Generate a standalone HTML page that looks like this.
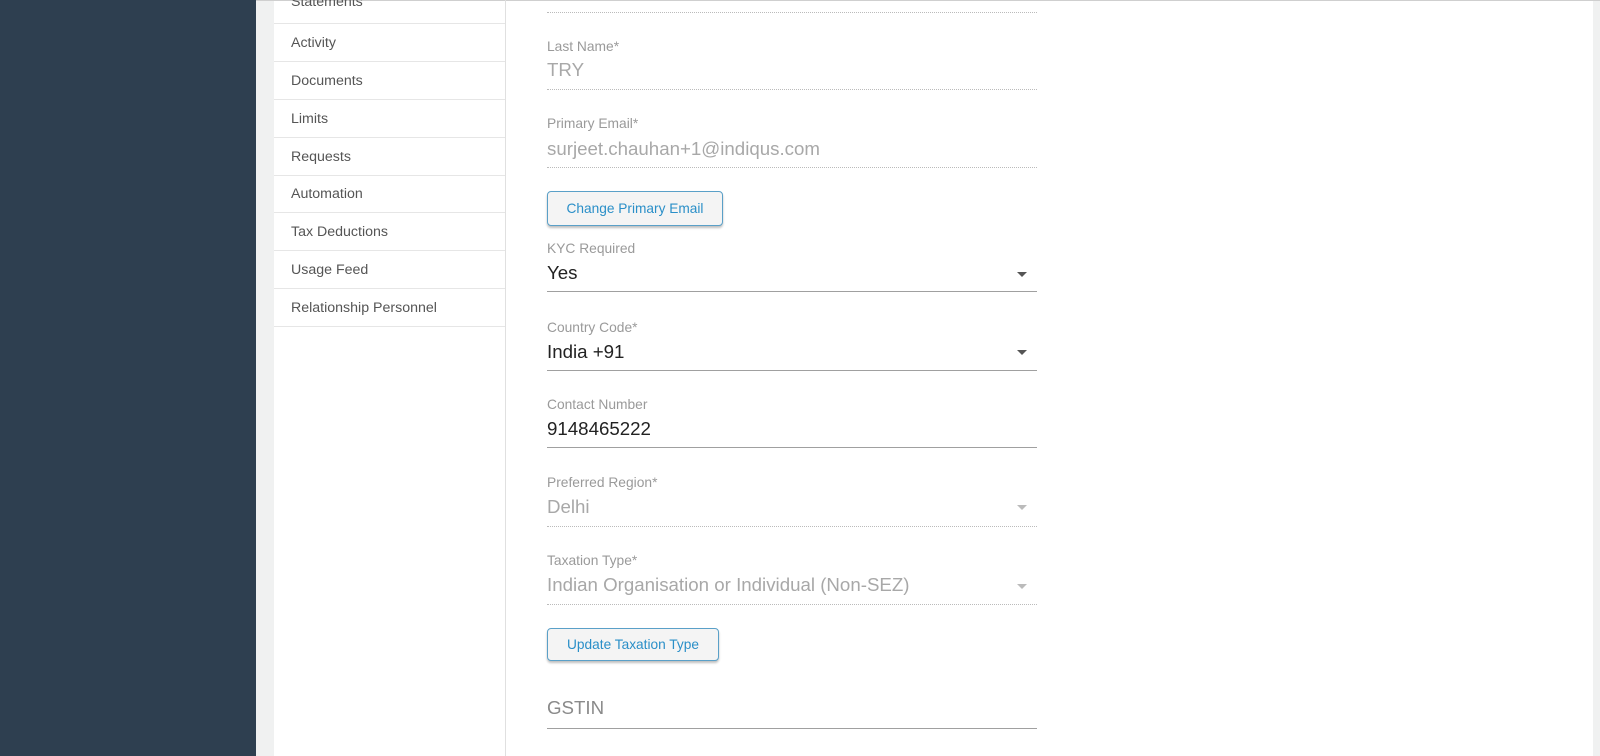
<!DOCTYPE html>
<html><head><meta charset="utf-8"><style>
*{margin:0;padding:0;box-sizing:border-box}
html,body{width:1600px;height:756px;overflow:hidden;background:#fff;font-family:"Liberation Sans",Arial,sans-serif}
.dark{position:absolute;left:0;top:0;width:256px;height:756px;background:#2e3f50}
.gutter{position:absolute;left:256px;top:0;width:18px;height:756px;background:#f0f1f1}
.topline{position:absolute;left:256px;top:0;width:1344px;height:1px;background:#cfcfcf}
.rgut{position:absolute;left:1593px;top:1px;width:7px;height:755px;background:#f0f1f1}
.nav{position:absolute;left:274px;top:0px;width:232px;height:756px;border-right:1px solid #e0e0e0}
.nav div{position:absolute;left:0;width:231px;border-bottom:1px solid #e6e6e6;font-size:14.2px;color:#555;padding-left:17px}
.a{position:absolute;white-space:nowrap}
.lbl{font-size:13.8px;color:#9a9a9a}
.val{font-size:18.7px;color:#222}
.dis{color:#a8a8a8}
.dot{position:absolute;left:547px;width:490px;border-top:1px dotted #bbb;height:0}
.sol{position:absolute;left:547px;width:490px;height:1px;background:#a0a0a0}
.btn{position:absolute;left:547px;border:1px solid #5aa0c8;border-radius:4px;background:#f4f4f4;color:#2a8fc8;font-size:13.7px;text-align:center;box-shadow:0 2px 2px rgba(0,0,0,.25)}
.car{position:absolute;left:1017px;width:0;height:0;border-left:5px solid transparent;border-right:5px solid transparent;border-top:5px solid #555}
</style></head><body>
<div class="dark"></div><div class="gutter"></div><div class="topline"></div><div class="rgut"></div>
<div class="nav">
<div style="top:-13px;height:37px;line-height:30px">Statements</div>
<div style="top:24px;height:38px;line-height:38px">Activity</div>
<div style="top:62px;height:38px;line-height:38px">Documents</div>
<div style="top:100px;height:38px;line-height:38px">Limits</div>
<div style="top:138px;height:38px;line-height:38px">Requests</div>
<div style="top:176px;height:37px;line-height:37px">Automation</div>
<div style="top:213px;height:38px;line-height:38px">Tax Deductions</div>
<div style="top:251px;height:38px;line-height:38px">Usage Feed</div>
<div style="top:289px;height:38px;line-height:38px">Relationship Personnel</div>
</div>

<div class="dot" style="top:12px"></div>

<div class="a lbl" style="left:547px;top:39px">Last Name*</div>
<div class="a val dis" style="left:547px;top:59px">TRY</div>
<div class="dot" style="top:89px"></div>

<div class="a lbl" style="left:547px;top:116px">Primary Email*</div>
<div class="a val dis" style="left:547px;top:138px">surjeet.chauhan+1@indiqus.com</div>
<div class="dot" style="top:167px"></div>

<div class="btn" style="top:191px;width:176px;height:35px;line-height:33px">Change Primary Email</div>

<div class="a lbl" style="left:547px;top:241px">KYC Required</div>
<div class="a val" style="left:547px;top:262px">Yes</div>
<div class="car" style="top:272px"></div>
<div class="sol" style="top:291px"></div>

<div class="a lbl" style="left:547px;top:320px">Country Code*</div>
<div class="a val" style="left:547px;top:341px">India +91</div>
<div class="car" style="top:350px"></div>
<div class="sol" style="top:370px"></div>

<div class="a lbl" style="left:547px;top:397px">Contact Number</div>
<div class="a val" style="left:547px;top:418px">9148465222</div>
<div class="sol" style="top:447px"></div>

<div class="a lbl" style="left:547px;top:475px">Preferred Region*</div>
<div class="a val dis" style="left:547px;top:496px">Delhi</div>
<div class="car" style="top:505px;border-top-color:#bbb"></div>
<div class="dot" style="top:526px"></div>

<div class="a lbl" style="left:547px;top:553px">Taxation Type*</div>
<div class="a val dis" style="left:547px;top:574px">Indian Organisation or Individual (Non-SEZ)</div>
<div class="car" style="top:584px;border-top-color:#bbb"></div>
<div class="dot" style="top:604px"></div>

<div class="btn" style="top:628px;width:172px;height:33px;line-height:31px">Update Taxation Type</div>

<div class="a val" style="left:547px;top:697px;color:#8a8a8a">GSTIN</div>
<div class="sol" style="top:728px"></div>
</body></html>
